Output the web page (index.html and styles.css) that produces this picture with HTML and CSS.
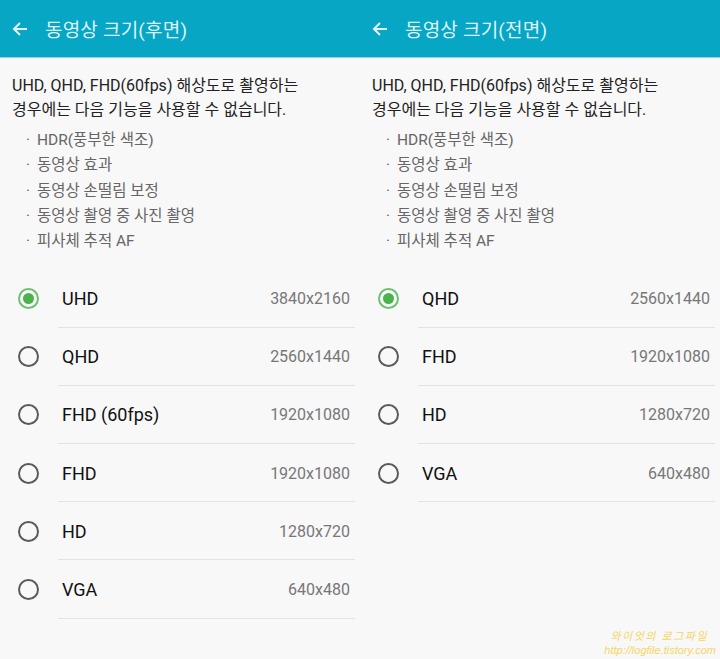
FILE: index.html
```html
<!DOCTYPE html>
<html lang="ko">
<head>
<meta charset="utf-8">
<link rel="stylesheet" href="styles.css">
</head>
<body>
<div class="screen">
  <section class="panel">
    <header class="bar">
      <svg class="back" width="18" height="18" viewBox="0 0 18 18"><path d="M16 9H3M9 3L3 9l6 6" fill="none" stroke="#e3f6fa" stroke-width="2"/></svg>
      <span class="title">동영상 크기(후면)</span>
    </header>
    <p class="desc">UHD, QHD, FHD(60fps) 해상도로 촬영하는<br>경우에는 다음 기능을 사용할 수 없습니다.</p>
    <ul class="bullets">
      <li>HDR(풍부한 색조)</li>
      <li>동영상 효과</li>
      <li>동영상 손떨림 보정</li>
      <li>동영상 촬영 중 사진 촬영</li>
      <li>피사체 추적 AF</li>
    </ul>
    <div class="options">
      <div class="opt"><span class="radio on"></span><span class="label">UHD</span><span class="val">3840x2160</span></div>
      <div class="opt"><span class="radio"></span><span class="label">QHD</span><span class="val">2560x1440</span></div>
      <div class="opt"><span class="radio"></span><span class="label">FHD (60fps)</span><span class="val">1920x1080</span></div>
      <div class="opt"><span class="radio"></span><span class="label">FHD</span><span class="val">1920x1080</span></div>
      <div class="opt"><span class="radio"></span><span class="label">HD</span><span class="val">1280x720</span></div>
      <div class="opt"><span class="radio"></span><span class="label">VGA</span><span class="val">640x480</span></div>
    </div>
  </section>
  <section class="panel">
    <header class="bar">
      <svg class="back" width="18" height="18" viewBox="0 0 18 18"><path d="M16 9H3M9 3L3 9l6 6" fill="none" stroke="#e3f6fa" stroke-width="2"/></svg>
      <span class="title">동영상 크기(전면)</span>
    </header>
    <p class="desc">UHD, QHD, FHD(60fps) 해상도로 촬영하는<br>경우에는 다음 기능을 사용할 수 없습니다.</p>
    <ul class="bullets">
      <li>HDR(풍부한 색조)</li>
      <li>동영상 효과</li>
      <li>동영상 손떨림 보정</li>
      <li>동영상 촬영 중 사진 촬영</li>
      <li>피사체 추적 AF</li>
    </ul>
    <div class="options">
      <div class="opt"><span class="radio on"></span><span class="label">QHD</span><span class="val">2560x1440</span></div>
      <div class="opt"><span class="radio"></span><span class="label">FHD</span><span class="val">1920x1080</span></div>
      <div class="opt"><span class="radio"></span><span class="label">HD</span><span class="val">1280x720</span></div>
      <div class="opt"><span class="radio"></span><span class="label">VGA</span><span class="val">640x480</span></div>
    </div>
  </section>
  <div class="watermark">
    <div class="wm1">와이엇의 로그파일</div>
    <div class="wm2">http://logfile.tistory.com</div>
  </div>
</div>
</body>
</html>
```

FILE: styles.css
```css
* { box-sizing: border-box; }
html, body { margin: 0; padding: 0; }
body {
  width: 720px;
  height: 659px;
  overflow: hidden;
  background: #f8f8f8;
  font-family: Roboto, "Noto Sans CJK KR", sans-serif;
}
.screen {
  position: relative;
  display: flex;
  width: 720px;
  height: 659px;
}
.panel {
  width: 360px;
  display: flex;
  flex-direction: column;
}
.bar {
  height: 58px;
  background: #07a6c4;
  border-bottom: 1px solid #8fd6e4;
  display: flex;
  align-items: center;
  padding-left: 11px;
  gap: 16px;
}
.back { flex: none; }
.title {
  color: #def4f8;
  font-size: 19px;
  letter-spacing: 0.2px;
}
.desc {
  margin: 16px 0 0;
  padding-left: 12px;
  font-size: 16px;
  line-height: 24px;
  color: #222;
}
.bullets {
  list-style: none;
  margin: 6px 0 0;
  padding: 0 0 0 26px;
  font-size: 15.5px;
  line-height: 25.3px;
  color: #666;
}
.bullets li::before {
  content: "·";
  display: inline-block;
  width: 11px;
}
.options {
  margin-top: 15px;
}
.opt {
  height: 58.2px;
  display: flex;
  align-items: center;
  position: relative;
  padding-right: 10px;
}
.opt::after {
  content: "";
  position: absolute;
  left: 58px;
  right: 5px;
  bottom: 0;
  height: 1px;
  background: #e2e2e2;
}
.radio {
  width: 21px;
  height: 21px;
  border: 2px solid #5a5a5a;
  border-radius: 50%;
  margin-left: 18px;
  flex: none;
  display: flex;
  align-items: center;
  justify-content: center;
}
.radio.on {
  border-color: #6cc070;
}
.radio.on::after {
  content: "";
  width: 11px;
  height: 11px;
  border-radius: 50%;
  background: #4db14f;
}
.label {
  margin-left: 23px;
  font-size: 18px;
  color: #111;
  flex: 1;
}
.val {
  font-size: 16px;
  color: #777;
}
.watermark {
  position: absolute;
  right: 4px;
  bottom: 2px;
  text-align: right;
  font-family: "Liberation Sans", "Noto Sans CJK KR", sans-serif;
  font-style: italic;
  color: #f4d666;
  font-size: 11px;
  line-height: 14px;
}
.wm1 { padding-right: 8px; letter-spacing: 1.5px; }
```
